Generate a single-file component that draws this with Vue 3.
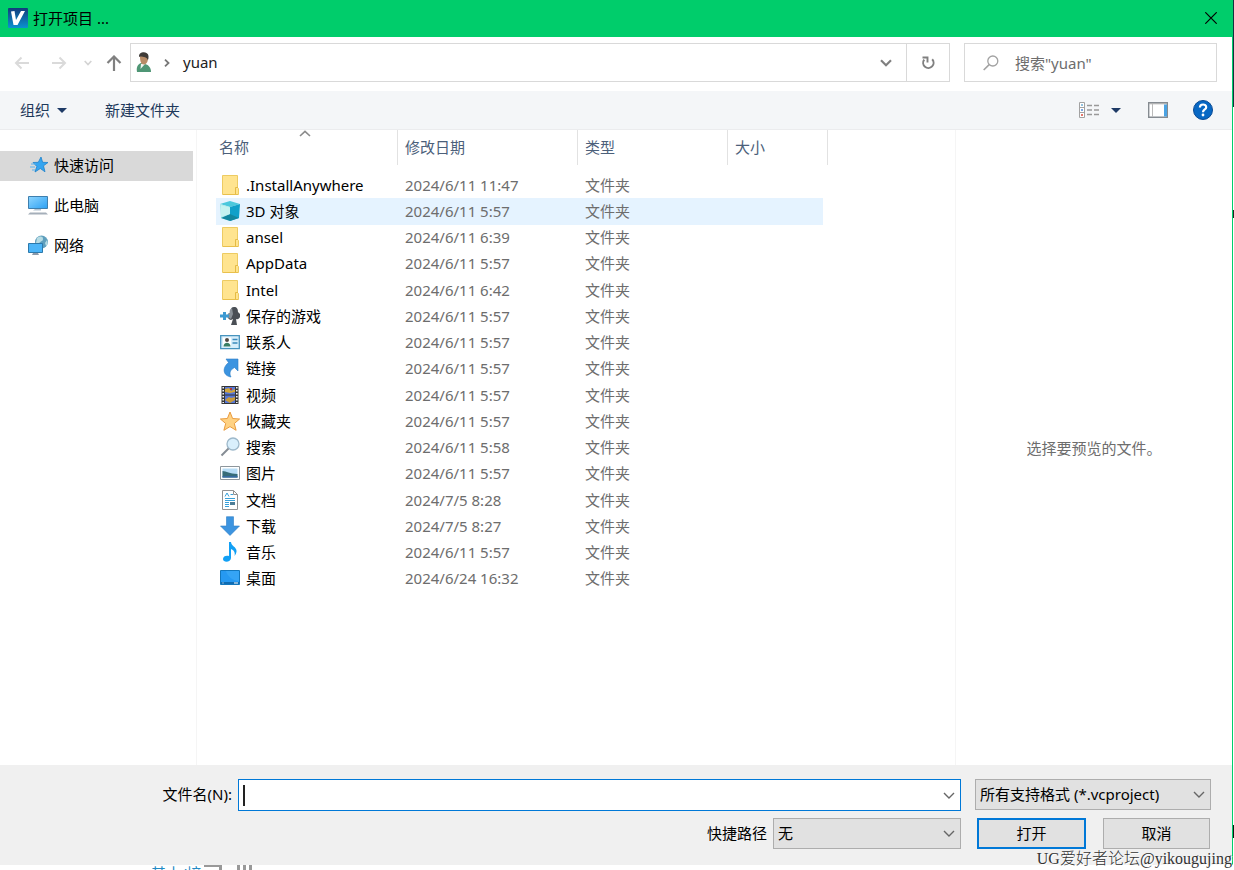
<script setup>
import { ref } from 'vue'

const places = [
  { icon: 'quick', name: '快速访问', active: true },
  { icon: 'pc', name: '此电脑' },
  { icon: 'network', name: '网络' },
]

const items = [
  { icon: 'folder', name: '.InstallAnywhere', date: '2024/6/11 11:47' },
  { icon: 'cube', name: '3D 对象', date: '2024/6/11 5:57', hover: true },
  { icon: 'folder', name: 'ansel', date: '2024/6/11 6:39' },
  { icon: 'folder', name: 'AppData', date: '2024/6/11 5:57' },
  { icon: 'folder', name: 'Intel', date: '2024/6/11 6:42' },
  { icon: 'games', name: '保存的游戏', date: '2024/6/11 5:57' },
  { icon: 'contacts', name: '联系人', date: '2024/6/11 5:57' },
  { icon: 'links', name: '链接', date: '2024/6/11 5:57' },
  { icon: 'video', name: '视频', date: '2024/6/11 5:57' },
  { icon: 'star', name: '收藏夹', date: '2024/6/11 5:57' },
  { icon: 'search', name: '搜索', date: '2024/6/11 5:58' },
  { icon: 'pictures', name: '图片', date: '2024/6/11 5:57' },
  { icon: 'docs', name: '文档', date: '2024/7/5 8:28' },
  { icon: 'download', name: '下载', date: '2024/7/5 8:27' },
  { icon: 'music', name: '音乐', date: '2024/6/11 5:57' },
  { icon: 'desktop', name: '桌面', date: '2024/6/24 16:32' },
]

const fileName = ref('')
</script>

<template>
  <div class="page">
    <div class="dialog">
      <header class="titlebar">
        <svg class="i20" viewBox="0 0 20 20">
          <defs>
            <linearGradient id="gv" x1="0" y1="0" x2="0" y2="1"><stop offset="0" stop-color="#123c7c" /><stop offset="1" stop-color="#0a93d0" /></linearGradient>
          </defs>
          <rect width="20" height="20" rx="1" fill="url(#gv)" />
          <path d="M3 3.500 6.500 3 8 12 13 3h4L9.500 17H5.500z" fill="#fff" />
        </svg>
        <h1>打开项目 ...</h1>
        <button class="close" aria-label="关闭">
          <svg width="12" height="12" viewBox="0 0 12 12"><path d="M.3.300 11.700 11.700M11.700.300.3 11.700" stroke="#000" stroke-width="1.200" /></svg>
        </button>
      </header>

      <nav class="nav">
        <button class="nb" aria-label="后退"><svg width="16" height="14" viewBox="0 0 16 14"><path d="M15 7H2M7.500 1.500 2 7l5.500 5.500" fill="none" stroke="#dadada" stroke-width="2" /></svg></button>
        <button class="nb fwd" aria-label="前进"><svg width="16" height="14" viewBox="0 0 16 14"><path d="M1 7h13M8.500 1.500 14 7l-5.500 5.500" fill="none" stroke="#dadada" stroke-width="2" /></svg></button>
        <button class="nb recent" aria-label="最近位置"><svg width="8" height="6" viewBox="0 0 8 6"><path d="M.7 1 4 4.500 7.300 1" fill="none" stroke="#d4d4d4" stroke-width="1.700" /></svg></button>
        <button class="nb up" aria-label="上移"><svg width="16" height="16" viewBox="0 0 16 16"><path d="M8 16V2M1.500 8 8 1.500 14.500 8" fill="none" stroke="#808080" stroke-width="2.200" /></svg></button>
        <div class="address">
          <svg class="user" width="16" height="21" viewBox="0 0 16 21">
            <path d="M1 20c-1-5 1-8 4-9l4 1c4 1 6 4 6 8z" fill="#4f9675" />
            <path d="m5 12-.5 5L9 12z" fill="#eef5f0" />
            <path d="M4 5c0-3 8-3 8 1 0 3-1 6-4 6.500C5 12.500 4 9 4 5z" fill="#b78b66" />
            <path d="M3 5c-.5-6 9-6 9.500-1 0 2 0 3-.7 4C11 5 8 5 4 4.500z" fill="#3e3a37" />
          </svg>
          <svg class="crumb" width="6" height="8" viewBox="0 0 6 8"><path d="M1 .700 4.500 4 1 7.300" fill="none" stroke="#777" stroke-width="1.800" /></svg>
          <button class="path">yuan</button>
          <button class="drop" aria-label="历史记录"><svg width="12" height="8" viewBox="0 0 12 8"><path d="M1 1.300 6 6.300l5-5" fill="none" stroke="#808080" stroke-width="2.200" /></svg></button>
          <button class="refresh" aria-label="刷新">
            <svg width="14" height="14" viewBox="0 0 14 14"><path d="M11.200 3.300A5.200 5.200 0 1 1 3.200 3.700" fill="none" stroke="#808080" stroke-width="2" /><path d="M1.500 1.500H6.500V6.500" fill="none" stroke="#808080" stroke-width="1.900" /></svg>
          </button>
        </div>
        <label class="search">
          <svg width="16" height="16" viewBox="0 0 16 16"><circle cx="9.800" cy="6" r="5" fill="none" stroke="#a2a2a2" stroke-width="1.300" /><path d="M6.200 9.700.700 15" stroke="#a2a2a2" stroke-width="1.600" /></svg>
          <input type="text" placeholder="搜索&quot;yuan&quot;" aria-label="搜索" />
        </label>
      </nav>

      <div class="toolbar">
        <button>组织<svg class="tri" width="10" height="5" viewBox="0 0 10 5"><path d="M0 0h10L5 5z" fill="#1e3a66" /></svg></button>
        <button>新建文件夹</button>
        <span class="grow"></span>
        <button class="view" aria-label="更改视图">
          <svg width="21" height="16" viewBox="0 0 21 16">
            <path d="M.5.500h5v15h-5zM.5 5.500h5M.5 10.500h5" fill="#fff" stroke="#a2a2a2" />
            <path d="M3 2v2" stroke="#6caed5" stroke-width="1.500" /><path d="M3 7v2" stroke="#4f88dd" stroke-width="1.500" /><path d="M3 12v2" stroke="#db4a3b" stroke-width="1.500" />
            <path d="M8 3.500h5M15 3.500h5M8 8h5M15 8h5M8 12.500h5M15 12.500h5" stroke="#999" stroke-width="1.500" />
          </svg>
          <svg class="tri" width="10" height="5" viewBox="0 0 10 5"><path d="M0 0h10L5 5z" fill="#1e3a66" /></svg>
        </button>
        <button class="pane" aria-label="预览窗格">
          <svg width="20" height="16" viewBox="0 0 20 16"><path d="M.7.700h18.600v14.600H.7z" fill="#fff" stroke="#858b91" stroke-width="1.400" /><path d="M1.400 1.800h17.200" stroke="#aaa" /><path d="M4.500 2v13" stroke="#bbb" /><path d="M16 2.500h3v12h-3z" fill="#4ba3e3" /></svg>
        </button>
        <button aria-label="帮助">
          <svg class="i20" viewBox="0 0 20 20"><circle cx="10" cy="10" r="9.500" fill="#0868c4" stroke="#0a4a94" /><path d="M6.900 7.600C6.900 3.500 13.200 3.600 13.200 7.200 13.200 9.600 10 9.400 10 12.200" fill="none" stroke="#fff" stroke-width="2.200" /><circle cx="10" cy="15" r="1.400" fill="#fff" /></svg>
        </button>
      </div>

      <main class="body">
        <aside class="side">
          <a v-for="p in places" :key="p.name" href="#" :class="{ active: p.active }">
            <svg class="i20" viewBox="0 0 20 20">
              <template v-if="p.icon === 'quick'">
                <path d="m13 2 1.600 5.300 5.400.200-4.500 3.300 1.500 6-4.700-3.300L7 17l1.800-5.600L5 7.500l5.300-.2z" fill="#35a5f0" stroke="#1d82cc" stroke-width=".8" />
                <path d="M3 9h5M2 12h5M4 15h3" stroke="#58b1ef" />
              </template>
              <template v-else-if="p.icon === 'pc'">
                <defs><linearGradient id="gp" x1="0" y1="0" x2="1" y2="1"><stop offset="0" stop-color="#8fd6ff" /><stop offset="1" stop-color="#2ba0f3" /></linearGradient></defs>
                <path d="M.5 1.500h19v12H.5z" fill="url(#gp)" stroke="#3e7fae" />
                <path d="M7 14h6v1.500H5z" fill="#b3c4d2" /><path d="M2 17.500h16l2 2H0z" fill="#a5afba" />
              </template>
              <template v-else>
                <circle cx="13.500" cy="7" r="6.500" fill="#5f9fbd" /><path d="M9 3c3-2 6-2 6 1s-4 2-4 5-2 0-3-1zm8 5 2-3c1 3 1 5-1 6z" fill="#b7dce4" />
                <path d="M.5 8.500h14v9H.5z" fill="#4bb5f8" stroke="#2c79ab" /><path d="M5 18h5l1 2H4z" fill="#8a9aab" />
              </template>
            </svg>
            {{ p.name }}
          </a>
        </aside>

        <section class="files">
          <table>
            <colgroup><col class="c1" /><col class="c2" /><col class="c3" /><col class="c4" /></colgroup>
            <thead>
              <tr>
                <th><div class="sorted">名称<svg class="caret-up" width="12" height="7" viewBox="0 0 12 7"><path d="m1 6 5-4.700L11 6" fill="none" stroke="#8b8b8b" stroke-width="1.600" /></svg></div></th>
                <th><div>修改日期</div></th>
                <th><div>类型</div></th>
                <th><div>大小</div></th>
              </tr>
            </thead>
            <tbody>
              <tr v-for="f in items" :key="f.name" :class="{ hover: f.hover }">
                <td>
                  <span class="name">
                    <svg class="i20" viewBox="0 0 20 20">
                      <template v-if="f.icon === 'folder'">
                        <path d="M2.500.500h15v12l1 1v6h-16z" fill="#ffe48f" stroke="#edcb62" /><path d="M15.500 19v-6.500h2.500" fill="none" stroke="#e5bb45" /><path d="M3 19.500h15" stroke="#e9c04c" />
                      </template>
                      <template v-else-if="f.icon === 'cube'">
                        <path d="m0 3 10-3 10 3-10 3z" fill="#4bc8dc" /><path d="m0 3 10 3v14L1 17z" fill="#a5e7ea" /><path d="m20 3-10 3v14l9-3z" fill="#10a0c9" /><path d="m10 13 9 4-9 3-9-3z" fill="#12879f" /><path d="m1 4 9 2.500V13l-9 3z" fill="#c5f2f0" />
                      </template>
                      <template v-else-if="f.icon === 'games'">
                        <path d="M14 1c-3 0-4 3-3 5-4 1-5 7 0 8l2-1-2 6h6l-1-6c3 1 5-2 4-5l-2-2c0-3-1-5-4-5z" fill="#4a4f55" /><path d="M12 2c-2 1-3 3-2 5-2 0-3 2-3 4l4 2 2-5z" fill="#8a9198" />
                        <path d="M3 6h3v2.500h3v3H6V14H3v-2.500H0v-3h3z" fill="#3d9ad2" />
                      </template>
                      <template v-else-if="f.icon === 'contacts'">
                        <path d="M.7 3.700h18.600v13H.7z" fill="#d7eefb" stroke="#4793bd" stroke-width="1.300" /><path d="M3 5.500h8v9H3z" fill="#fff" /><circle cx="7" cy="8" r="2" fill="#514841" /><path d="M3.500 14.500c0-5 7-5 7 0z" fill="#397e63" /><path d="M12.500 7.500h5M12.500 11h5" stroke="#3c8abb" stroke-width="1.500" />
                      </template>
                      <template v-else-if="f.icon === 'links'">
                        <path d="M6 1h12v12l-3.500-3.500C10 12 9 15 11 19 4 18 1 11 8.500 4.500z" fill="#3c94e0" stroke="#2b7dc6" stroke-width=".6" />
                      </template>
                      <template v-else-if="f.icon === 'video'">
                        <path d="M1.500 1h17v18h-17z" fill="#353535" /><path d="M5 2h10v7.500H5z" fill="#5777d6" /><path d="M5 10.500h10V18H5z" fill="#5777d6" /><path d="m5 4 4-1 2 3 4-2v3l-5 1-5-1z" fill="#d2a63b" /><path d="m5 15 4-3 2 1 4-1v3l-5 3z" fill="#c6993b" /><path d="M10 3h2v2h-2z" fill="#b53c31" /><path d="M3.200 2v16M16.800 2v16" stroke="#fff" stroke-width="1.500" stroke-dasharray="1.500 1.500" />
                      </template>
                      <template v-else-if="f.icon === 'star'">
                        <path d="m10 1 2.600 6.500 7 .500-5.300 4.500 1.800 6.800L10 15.600l-6.100 3.700 1.800-6.800L.4 8l7-.5z" fill="#ffd283" stroke="#e99b3e" />
                      </template>
                      <template v-else-if="f.icon === 'search'">
                        <circle cx="13" cy="7" r="6" fill="#d9effc" stroke="#9db8ca" stroke-width="1.300" /><path d="m8.500 11.500-7 7" stroke="#858c94" stroke-width="2" />
                      </template>
                      <template v-else-if="f.icon === 'pictures'">
                        <path d="M.5 3.500h19v13H.5z" fill="#fff" stroke="#8e969c" /><path d="M2.500 5.500h15v9h-15z" fill="#b7dcf5" /><path d="M2.500 8c4 0 7 3 15 3v3.500h-15z" fill="#376c78" /><path d="M2.500 13h15v1.500h-15z" fill="#396aa2" />
                      </template>
                      <template v-else-if="f.icon === 'docs'">
                        <path d="M2.500.500h11l4 4v15h-15z" fill="#fff" stroke="#929292" /><path d="M13.500.500v4h4" fill="none" stroke="#929292" /><path d="M5 6.500 7 3l2 3.500M10.500 4.500H13M5 8.500h10M5 10.500h10M5 12.500h4M5 14.500h4M5 16.500h4" fill="none" stroke="#38a0d9" /><path d="M10 12h5v3h-5z" fill="#4e7d96" />
                      </template>
                      <template v-else-if="f.icon === 'download'">
                        <path d="M6.500.700h7V10H19.500L10 19.500.5 10h6z" fill="#3c94e0" stroke="#2b7dc6" stroke-width=".6" />
                      </template>
                      <template v-else-if="f.icon === 'music'">
                        <path d="M9 0h2c0 4 6 5 5.500 9.500-.2 2-1 3-2 4.500 1-4-1-6-3.500-7v9c0 4.500-8 5-8 1 0-3 3.500-4 6-3z" fill="#12a0f5" />
                      </template>
                      <template v-else>
                        <path d="M.5 2.500h19v14H.5z" fill="#2699f2" stroke="#1377bd" /><path d="M19 3v10C13 13 7 8 6 3z" fill="#35a4f5" /><path d="M1 15h18" stroke="#085e9e" stroke-width="1.500" /><path d="M2.500 15h1M14 15h4" stroke="#fff" />
                      </template>
                    </svg>
                    {{ f.name }}
                  </span>
                </td>
                <td>{{ f.date }}</td>
                <td>文件夹</td>
                <td></td>
              </tr>
            </tbody>
          </table>
        </section>

        <section class="preview">选择要预览的文件。</section>
      </main>

      <footer class="foot">
        <div class="line">
          <label class="lbl" for="fname">文件名(N):</label>
          <div class="combo">
            <span class="cursor"></span>
            <input id="fname" v-model="fileName" type="text" autocomplete="off" />
            <svg width="12" height="7" viewBox="0 0 12 7"><path d="m1 1 5 5 5-5" fill="none" stroke="#666" stroke-width="1.400" /></svg>
          </div>
          <div class="sel right">
            <select aria-label="文件类型"><option>所有支持格式 (*.vcproject)</option></select>
            <svg width="12" height="7" viewBox="0 0 12 7"><path d="m1 1 5 5 5-5" fill="none" stroke="#666" stroke-width="1.400" /></svg>
          </div>
        </div>
        <div class="line">
          <label class="quick" for="shortcut">快捷路径</label>
          <div class="sel short">
            <select id="shortcut"><option>无</option></select>
            <svg width="12" height="7" viewBox="0 0 12 7"><path d="m1 1 5 5 5-5" fill="none" stroke="#666" stroke-width="1.400" /></svg>
          </div>
          <div class="right actions">
            <button class="primary">打开</button>
            <button>取消</button>
          </div>
        </div>
      </footer>
    </div>
    <div class="behind"><span>基本/培</span><i></i><i class="bars"></i></div>
    <div class="edge"></div>
    <div class="mark">UG爱好者论坛@yikougujing</div>
  </div>
</template>

<style>
body { margin: 0; background: #fff; }
</style>

<style scoped>
.page {
  position: relative;
  min-height: 100vh;
  display: grid;
  grid-template-columns: 1fr 1px;
  grid-template-rows: 1fr 5px;
  font: 15px/20px "Noto Sans", "Noto Sans CJK SC", sans-serif;
  color: #000;
  overflow: hidden;
}
.page * { box-sizing: border-box; }
svg { display: block; flex: none; }
.i20 { width: 20px; height: 20px; }
button, input, select { font: inherit; color: inherit; margin: 0; }
button { background: none; border: 0; padding: 0; display: flex; align-items: center; }
.dialog { display: flex; flex-direction: column; border-right: 1px solid #00cd6b; min-width: 0; }

.titlebar { height: 37px; background: #00cd6b; display: flex; align-items: center; padding: 0 16px 2px 8px; gap: 5px; margin-right: -1px; }
h1 { font: inherit; margin: 0; flex: 1; }

.nav { height: 54px; padding: 6px 15px 9px 14px; display: flex; align-items: center; }
.fwd { margin-left: 21px; }
.recent { margin-left: 17px; }
.up { margin-left: 14px; }
.address { flex: 1; height: 39px; margin-left: 8px; border: 1px solid #d9d9d9; display: flex; align-items: center; padding-left: 5px; }
.crumb { margin: 0 13px 0 12px; }
.path { flex: 1; align-self: stretch; padding-bottom: 2px; color: #222; }
.drop { margin-right: 14px; }
.refresh { width: 43px; align-self: stretch; border-left: 1px solid #d9d9d9; justify-content: center; }
.search { width: 253px; height: 39px; margin-left: 14px; border: 1px solid #d9d9d9; display: flex; align-items: center; padding-left: 18px; gap: 16px; }
.search input { flex: 1; min-width: 0; border: 0; padding: 0; outline: 0; background: none; }
.search input::placeholder { color: #6d6d6d; opacity: 1; }

.toolbar { height: 39px; background: #f4f6f8; border-bottom: 1px solid #ebecee; display: flex; align-items: center; padding: 0 19px 0 20px; color: #1e395b; }
.tri { margin-left: 7px; }
.toolbar button + button { margin-left: 38px; }
.grow { flex: 1; }
.view .tri { margin-left: 11px; }
.toolbar .pane { margin-left: 27px; }
.toolbar .pane + button { margin-left: 25px; }

.body { flex: 1; display: flex; }
.side { width: 197px; padding: 21px 3px 0 0; border-right: 1px solid #f5f5f5; display: flex; flex-direction: column; gap: 10px; }
.side a { height: 30px; display: flex; align-items: center; gap: 6px; padding: 0 0 2px 28px; color: #000; text-decoration: none; }
.side a.active { background: #d9d9d9; }
.files { flex: 1; padding-left: 19px; min-width: 0; }
table { width: 612px; height: 462px; border-collapse: separate; border-spacing: 0; table-layout: fixed; }
.c1 { width: 182px; }
.c2 { width: 180px; }
.c3 { width: 150px; }
.c4 { width: 100px; }
th { height: 42px; padding: 0; vertical-align: top; font-weight: 400; text-align: left; color: #4c607a; }
th div { height: 35px; padding: 7px 0 0 7px; border-right: 1px solid #e2e2e2; }
th .sorted { position: relative; padding-left: 3px; }
.caret-up { position: absolute; left: 83px; top: 0; }
td { padding: 0 0 1px 7px; color: #6d6d6d; vertical-align: middle; white-space: nowrap; }
td:first-child { padding-left: 4px; color: #000; }
td:last-child { padding: 0 5px 0 0; background-clip: content-box; }
.hover td { background-color: #e5f3ff; }
.name { display: flex; align-items: center; gap: 6px; }
.preview { width: 277px; border-left: 1px solid #f5f5f5; display: flex; align-items: center; justify-content: center; color: #6d6d6d; }

.foot { background: #f0f0f0; padding: 14px 21px 16px 0; display: flex; flex-direction: column; gap: 7px; }
.line { display: flex; align-items: flex-start; }
.line label { line-height: 31px; text-align: right; }
.lbl { width: 232px; margin-right: 6px; }
.combo { flex: 1; height: 32px; border: 1px solid #0078d7; background: #fff; display: flex; align-items: center; padding: 0 5px 0 4px; }
.combo input { flex: 1; min-width: 0; border: 0; padding: 0; outline: 0; background: none; }
.cursor { width: 2px; height: 21px; background: #222; }
.combo:focus-within .cursor { visibility: hidden; }
.sel { display: grid; height: 31px; }
.sel select, .sel svg { grid-area: 1 / 1; }
.sel select { appearance: none; width: 100%; border: 1px solid #adadad; border-radius: 0; background: #e1e1e1; padding: 0 24px 1px 4px; }
.sel svg { place-self: center end; margin-right: 6px; pointer-events: none; }
.right { width: 236px; margin-left: 14px; }
.quick { flex: 1; margin-right: 6px; }
.short { width: 188px; }
.actions { display: flex; gap: 17px; padding: 0 1px 0 2px; }
.actions button { flex: 1; height: 31px; justify-content: center; background: #e1e1e1; border: 1px solid #adadad; padding-bottom: 1px; }
.actions .primary { border: 2px solid #0078d7; }

.behind { grid-row: 2; height: 5px; overflow: hidden; display: flex; padding-left: 151px; color: #238ac5; line-height: 16px; }
.behind i { width: 18px; height: 5px; margin-left: 2px; border: solid #999; border-width: 2px 3px 0 0; }
.behind .bars { width: 15px; margin-left: 15px; border: 0; background: repeating-linear-gradient(90deg, #999 0 3px, #fff 3px 6px); }
.edge { grid-row: 1 / 3; grid-column: 2; background: linear-gradient(#123240 0 107px, #fff 107px 210px, #222 210px 218px, #fff 218px 825px, #111 825px 838px, #fff 838px); }
.mark { position: absolute; right: 2px; bottom: 1px; font: 16px/20px "Liberation Serif", "Noto Sans CJK SC", serif; font-weight: 300; color: #333; text-shadow: 1px 1px 0 #fff; }
</style>
